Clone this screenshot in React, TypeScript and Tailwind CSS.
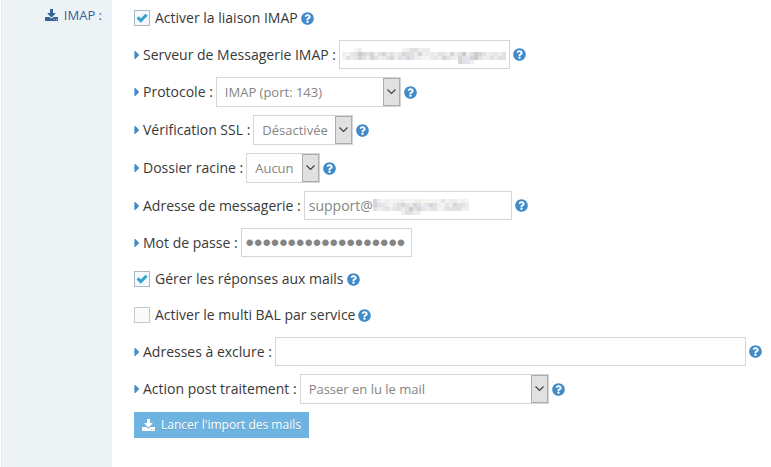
import { ReactNode } from "react";
import { FaCaretRight, FaQuestionCircle } from "react-icons/fa";

const DownloadIcon = () => (
  <svg viewBox="0 -100 1664 1636" fill="currentColor" className="size-[13px] shrink-0" aria-hidden="true">
    <path d="M1280 1216q0-26-19-45t-45-19-45 19-19 45 19 45 45 19 45-19 19-45zm256 0q0-26-19-45t-45-19-45 19-19 45 19 45 45 19 45-19 19-45zm128-224v320q0 40-28 68t-68 28H96q-40 0-68-28t-28-68V992q0-40 28-68t68-28h465l135 136q58 56 136 56t136-56l136-136h464q40 0 68 28t28 68zm-325-569q17 41-14 70l-448 448q-18 19-45 19t-45-19L339 493q-31-29-14-70 17-39 59-39h256V-64q0-26 19-45t45-19h256q26 0 45 19t19 45v448h256q42 0 59 39z" />
  </svg>
);

const Help = () => (
  <button type="button" aria-label="Aide" className="ml-[3px] shrink-0 text-[#428bca]">
    <FaQuestionCircle size={13} />
  </button>
);

// Masked text, one letter per 4px block
const shades: Record<string, string> = {
  a: "#f7f5f2",
  b: "#efeeee",
  c: "#e1e1e3",
  d: "#d6d6d8",
  e: "#e8eeee",
  f: "#f1e8e3",
  g: "#e1e5ed",
  h: "#cbcbcd",
};

const serverMask = [
  "...ab..........abccbef...................",
  "bagchdcdbcdfcbgdccedbefbcgbdfchbchdcbfgbc",
  "acfgdcbdcbfcdbcgdcebaafgbdcfbdcgdhcebcecc",
  ".............................dcgb........",
];

const addressMask = [
  "dbabaabbaabbaaaaagabeaba",
  "dcgbafcdcfdcegdcbagbdcce",
  "cbfcbgcechcdcbgcabcgccbb",
  ".......bccbb............",
];

const Mask = ({ rows, className }: { rows: string[]; className: string }) => (
  <svg
    width={rows[0].length * 4}
    height={rows.length * 4}
    shapeRendering="crispEdges"
    className={`pointer-events-none absolute top-2 ${className}`}
    aria-hidden="true"
  >
    {rows.map((row, y) =>
      row
        .split("")
        .map((shade, x) =>
          shade === "." ? null : (
            <rect key={`${x}-${y}`} x={x * 4} y={y * 4} width="4" height="4" fill={shades[shade]} />
          )
        )
    )}
  </svg>
);

interface FieldProps {
  id: string;
  label: string;
  help?: boolean;
  children: ReactNode;
}

const Field = ({ id, label, help = true, children }: FieldProps) => (
  <div className="flex items-center">
    <FaCaretRight size={14} className="-mr-px -ml-1 shrink-0 text-[#428bca]" />
    <label htmlFor={id} className="mr-[3px] shrink-0">
      {label} :
    </label>
    {children}
    {help && <Help />}
  </div>
);

interface SelectProps {
  id: string;
  option: string;
  className: string;
}

const Select = ({ id, option, className }: SelectProps) => (
  <div className={`relative ${className}`}>
    <select
      id={id}
      className="block h-[30px] w-full appearance-none border border-[#d5d5d5] bg-white pl-2 text-[13px] text-[#858585] outline-none"
    >
      <option>{option}</option>
    </select>
    <span className="pointer-events-none absolute inset-y-px right-px flex w-[17px] items-center justify-center border border-[#adadad] bg-[#e1e1e1]">
      <svg width="9" height="6" viewBox="0 0 9 6" fill="none" stroke="#404040" strokeWidth="1.2">
        <path d="M.5 .5 4.5 4.5 8.5 .5" />
      </svg>
    </span>
  </div>
);

interface CheckProps {
  id: string;
  label: string;
  checked?: boolean;
}

const Check = ({ id, label, checked = false }: CheckProps) => (
  <div className="flex h-7 items-center">
    <span className="relative mr-[5px] size-4 shrink-0">
      <input
        id={id}
        type="checkbox"
        defaultChecked={checked}
        className="peer block size-4 appearance-none border border-[#c8c8c8] bg-[#fafafa] checked:border-[#adb8c0] checked:bg-[#f5f8fc]"
      />
      <svg
        viewBox="0 0 16 16"
        className="pointer-events-none absolute inset-0 hidden size-4 fill-none stroke-[#32a3ce] stroke-3 peer-checked:block"
      >
        <path d="M3.6 7.4 6.8 10.6 12.6 4.8" />
      </svg>
    </span>
    <label htmlFor={id}>{label}</label>
    <Help />
  </div>
);

export default function App() {
  return (
    <div className="flex min-h-screen bg-white pl-px font-['Open_Sans',sans-serif] text-sm text-[#393939]">
      <aside className="w-[111px] shrink-0 border-l border-[#dcebf0] bg-[#edf3f4] pt-1.5 pr-2.5 text-[13px] text-[#336199]">
        <div className="flex items-center justify-end gap-1.5">
          <DownloadIcon />
          IMAP :
        </div>
      </aside>

      <main className="flex min-w-0 grow flex-col gap-2 pt-1 pr-[9px] pl-[22px]">
        <Check id="imap" label="Activer la liaison IMAP" checked />
        <Field id="server" label="Serveur de Messagerie IMAP">
          <div className="relative">
            <input id="server" className="block h-[29px] w-[171px] border border-[#d5d5d5] px-1" />
            <Mask rows={serverMask} className="left-[3px]" />
          </div>
        </Field>
        <Field id="protocol" label="Protocole">
          <Select id="protocol" option="IMAP (port: 143)" className="w-[185px]" />
        </Field>
        <Field id="ssl" label="Vérification SSL">
          <Select id="ssl" option="Désactivée" className="w-[100px]" />
        </Field>
        <Field id="folder" label="Dossier racine">
          <Select id="folder" option="Aucun" className="w-[74px]" />
        </Field>
        <Field id="address" label="Adresse de messagerie">
          <div className="relative">
            <input
              id="address"
              defaultValue="support@"
              className="block h-[29px] w-[208px] border border-[#d5d5d5] px-1 text-[#858585]"
            />
            <Mask rows={addressMask} className="left-[69px]" />
          </div>
        </Field>
        <Field id="password" label="Mot de passe" help={false}>
          <input
            id="password"
            type="password"
            defaultValue="motdepassemotdepass"
            className="h-[29px] w-[171px] border border-[#d5d5d5] px-1 font-['Liberation_Sans',sans-serif] text-2xl text-[#858585]"
          />
        </Field>
        <Check id="replies" label="Gérer les réponses aux mails" checked />
        <Check id="multi" label="Activer le multi BAL par service" />
        <Field id="exclude" label="Adresses à exclure">
          <input id="exclude" className="h-[29px] min-w-0 grow border border-[#d5d5d5] px-1" />
        </Field>
        <Field id="action" label="Action post traitement">
          <Select id="action" option="Passer en lu le mail" className="w-[249px]" />
        </Field>
        <button
          type="button"
          className="flex h-[26px] items-center gap-1.5 self-start bg-[#6fb3e0] px-2 text-xs text-white text-shadow-2xs"
        >
          <DownloadIcon />
          Lancer l'import des mails
        </button>
      </main>
    </div>
  );
}
